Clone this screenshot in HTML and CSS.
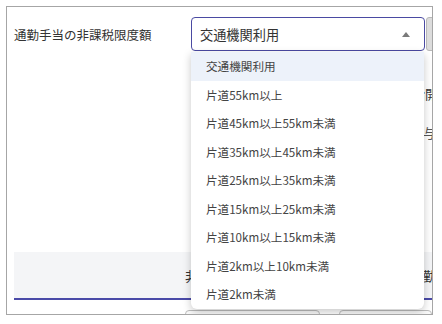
FILE: index.html
```html
<!DOCTYPE html>
<html lang="ja">
<head>
<meta charset="utf-8">
<link rel="stylesheet" href="styles.css">
</head>
<body>
<div class="frame">
  <div class="top">
    <div class="label">通勤手当の非課税限度額</div>
    <div class="select-wrap">
      <div class="select">
        <span class="value">交通機関利用</span>
        <span class="arrow"></span>
      </div>
      <ul class="menu">
        <li class="item active">交通機関利用</li>
        <li class="item">片道55km以上</li>
        <li class="item">片道45km以上55km未満</li>
        <li class="item">片道35km以上45km未満</li>
        <li class="item">片道25km以上35km未満</li>
        <li class="item">片道15km以上25km未満</li>
        <li class="item">片道10km以上15km未満</li>
        <li class="item">片道2km以上10km未満</li>
        <li class="item">片道2km未満</li>
      </ul>
    </div>
    <div class="side-btn"></div>
  </div>
  <div class="mid">
    <div class="mrow r1"><span>支給開始</span></div>
    <div class="mrow r2"><span>給与</span></div>
  </div>
  <div class="band">
    <span class="b1">非課税</span>
    <span class="b2">通勤</span>
  </div>
  <div class="buttons">
    <div class="btn b-a"></div>
    <div class="btn b-b"></div>
  </div>
</div>
</body>
</html>
```
FILE: styles.css
```css
* { box-sizing: border-box; }
html, body {
  margin: 0;
  padding: 0;
  background: #ffffff;
  font-family: "Noto Sans CJK JP", "Noto Sans", sans-serif;
  color: #333;
}
.frame {
  margin: 6px;
  width: 427px;
  height: 309px;
  border: 1px solid #a6a6a6;
  overflow: hidden;
}
.top {
  display: flex;
  align-items: center;
  padding: 10px 0 0 7px;
}
.label {
  width: 177px;
  font-size: 12.5px;
  color: #333;
  flex: none;
}
.select-wrap {
  position: relative;
  width: 234px;
  flex: none;
}
.select {
  height: 34px;
  border: 1px solid #4a4aa2;
  border-radius: 4px;
  display: flex;
  align-items: center;
  padding: 0 14px 0 8px;
  background: #fff;
}
.value {
  font-size: 13.2px;
  color: #333;
  flex: 1;
}
.arrow {
  width: 0;
  height: 0;
  border-left: 4px solid transparent;
  border-right: 4px solid transparent;
  border-bottom: 5px solid #7a7a7a;
}
.menu {
  position: absolute;
  left: 0;
  top: calc(100% + 1px);
  width: 233px;
  margin: 0;
  padding: 0;
  list-style: none;
  background: #fff;
  border-radius: 0 0 6px 6px;
  box-shadow: 0 3px 9px rgba(0, 0, 0, 0.22);
  z-index: 10;
}
.item {
  height: 28.5px;
  line-height: 28.5px;
  padding-left: 15px;
  font-size: 11.6px;
  color: #444;
}
.item.active {
  background: #edf2fa;
}
.side-btn {
  flex: none;
  width: 60px;
  height: 34px;
  margin-left: 1px;
  border: 1px solid #b8b8b8;
  border-radius: 3px;
  background: #dcdcdc;
}
.mid {
  height: 201px;
  padding-top: 33px;
}
.mrow {
  height: 20px;
  font-size: 13px;
  white-space: nowrap;
}
.r1 {
  padding-left: 392px;
  color: #333;
}
.r2 {
  margin-top: 19px;
  padding-left: 403px;
  color: #555;
}
.band {
  margin-left: 7px;
  height: 48px;
  background: #f4f5f7;
  border-bottom: 2px solid #4a4aa8;
  display: flex;
  align-items: center;
  white-space: nowrap;
  font-size: 13px;
  color: #333;
}
.b1 { margin-left: 171px; }
.b2 { margin-left: 186px; }
.buttons {
  display: flex;
  margin-top: 10px;
  gap: 19px;
  padding-left: 178px;
}
.btn {
  height: 30px;
  border: 1px solid #bdbdbd;
  border-radius: 4px;
  background: #fafafa;
}
.b-a { width: 145px; }
.b-b { width: 100px; }
```
